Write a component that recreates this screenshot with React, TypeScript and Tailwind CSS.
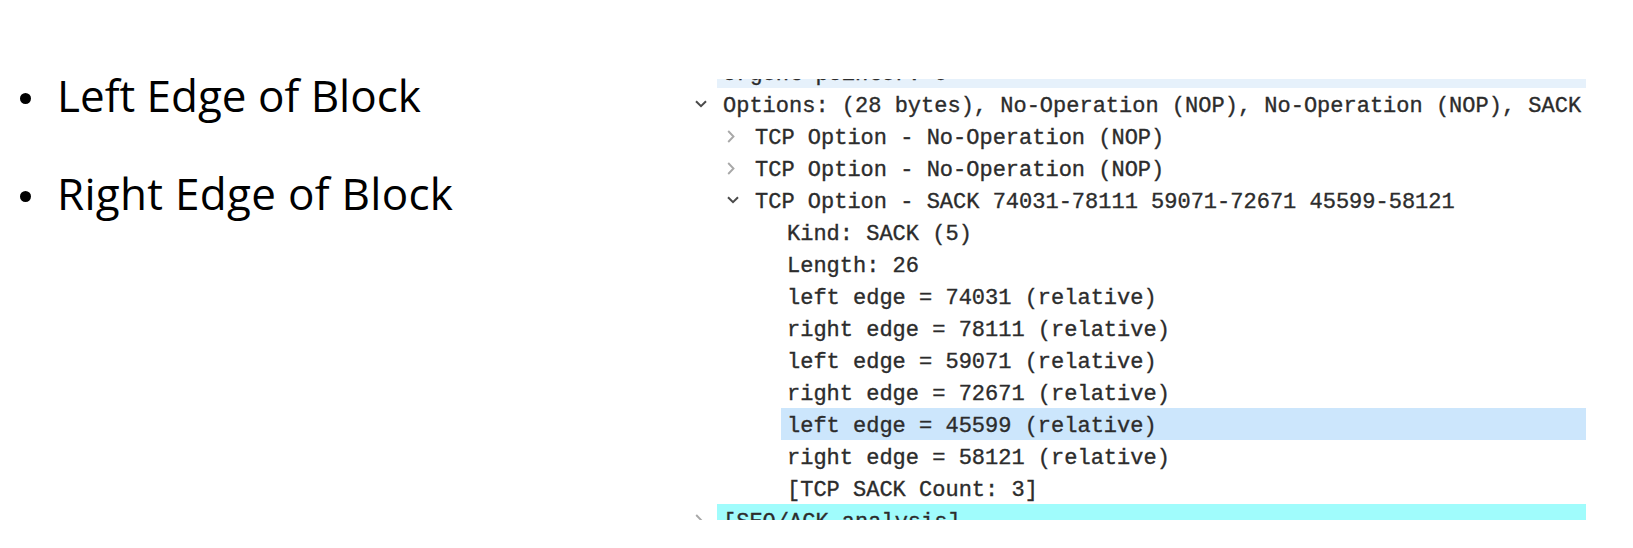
import React from "react";

type Row = {
  level: number;
  chevron?: "open" | "closed";
  text: string;
  bg?: string;
};

const rows: Row[] = [
  { level: 0, text: "Urgent pointer: 0", bg: "bg-[#e6f1fb]" },
  { level: 0, chevron: "open", text: "Options: (28 bytes), No-Operation (NOP), No-Operation (NOP), SACK" },
  { level: 1, chevron: "closed", text: "TCP Option - No-Operation (NOP)" },
  { level: 1, chevron: "closed", text: "TCP Option - No-Operation (NOP)" },
  { level: 1, chevron: "open", text: "TCP Option - SACK 74031-78111 59071-72671 45599-58121" },
  { level: 2, text: "Kind: SACK (5)" },
  { level: 2, text: "Length: 26" },
  { level: 2, text: "left edge = 74031 (relative)" },
  { level: 2, text: "right edge = 78111 (relative)" },
  { level: 2, text: "left edge = 59071 (relative)" },
  { level: 2, text: "right edge = 72671 (relative)" },
  { level: 2, text: "left edge = 45599 (relative)", bg: "bg-[#cce6fc]" },
  { level: 2, text: "right edge = 58121 (relative)" },
  { level: 2, text: "[TCP SACK Count: 3]" },
  { level: 0, chevron: "closed", text: "[SEQ/ACK analysis]", bg: "bg-[#a0fcfc]" },
];

function Chevron({ kind }: { kind?: Row["chevron"] }) {
  if (!kind) return null;
  if (kind === "open") {
    return (
      <svg width="12" height="8" viewBox="0 0 12 8">
        <path d="M1 1.2 L6 6.2 L11 1.2" fill="none" stroke="#4a4a4a" strokeWidth="2" />
      </svg>
    );
  }
  return (
    <svg width="8" height="13" viewBox="0 0 8 13">
      <path d="M1.2 1 L6.5 6.5 L1.2 12" fill="none" stroke="#a8a8a8" strokeWidth="1.9" />
    </svg>
  );
}

function TreeRow({ row }: { row: Row }) {
  const pad = row.level === 0 ? "pl-0" : row.level === 1 ? "pl-[32px]" : "pl-[64px]";
  return (
    <div className={`flex h-[32px] ${pad}`}>
      <div className="flex h-[32px] w-[27px] shrink-0 items-center justify-start pl-[5px]">
        <Chevron kind={row.chevron} />
      </div>
      <div
        className={`h-[32px] flex-1 whitespace-nowrap pl-[6px] pt-[6px] text-[22px] leading-[26px] text-[#2c2c2c] [-webkit-text-stroke:0.35px_#2c2c2c] ${row.bg ?? ""}`}
        style={{ fontFamily: '"Liberation Mono", "DejaVu Sans Mono", monospace' }}
      >
        {row.text}
      </div>
    </div>
  );
}

export default function App() {
  return (
    <div className="flex h-[548px] w-[1633px] overflow-hidden bg-white">
      <div
        className="w-[690px] shrink-0 pt-[65px] text-black"
        style={{ fontFamily: '"Open Sans", "Noto Sans", sans-serif' }}
      >
        <div className="flex h-[60px] items-center">
          <div className="ml-[20px] mt-[6px] h-[11px] w-[11px] shrink-0 rounded-full bg-black" />
          <div className="ml-[26px] text-[44px] leading-[60px]">Left Edge of Block</div>
        </div>
        <div className="mt-[38px] flex h-[60px] items-center">
          <div className="ml-[20px] mt-[6px] h-[11px] w-[11px] shrink-0 rounded-full bg-black" />
          <div className="ml-[26px] text-[44px] leading-[60px] tracking-[0.3px]">Right Edge of Block</div>
        </div>
      </div>
      <div className="pt-[79px]">
        <div className="h-[441px] w-[896px] overflow-hidden">
          <div className="-mt-[23px]">
            {rows.map((r, i) => (
              <TreeRow key={i} row={r} />
            ))}
          </div>
        </div>
      </div>
    </div>
  );
}
